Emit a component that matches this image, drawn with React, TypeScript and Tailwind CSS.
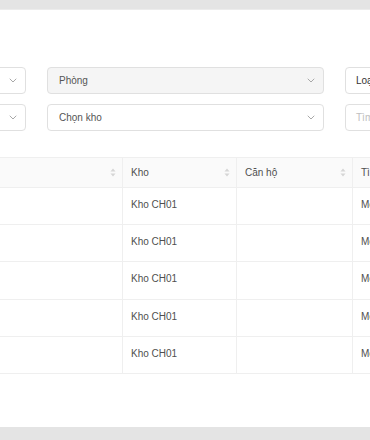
import React from "react";

const Chevron = () => (
  <svg width="8" height="5" viewBox="0 0 8 5" fill="none" className="shrink-0">
    <path d="M1 1l3 3 3-3" stroke="#a8a8a8" strokeWidth="1" strokeLinecap="round" strokeLinejoin="round" />
  </svg>
);

const Sorter = () => (
  <svg width="6" height="9" viewBox="0 0 6 9" className="shrink-0">
    <path d="M3 0.5L5.5 3.5H0.5Z" fill="#d6d6d6" />
    <path d="M3 8.5L0.5 5.5H5.5Z" fill="#d6d6d6" />
  </svg>
);

const rows = [0, 1, 2, 3, 4];

export default function App() {
  return (
    <div
      className="w-[370px] h-[440px] overflow-hidden bg-[#e4e4e4] flex flex-col"
      style={{ fontFamily: '"Liberation Sans", Arial, sans-serif' }}
    >
      <div className="h-[10px] shrink-0 bg-[#e4e4e4] border-b border-[#ececec]" />
      <div className="h-[417px] shrink-0 bg-white flex flex-col overflow-hidden">
        <div className="h-[57px] shrink-0" />
        {/* filters */}
        <div className="flex flex-col gap-[10px]">
          <div className="flex gap-[21px] -ml-[20px] h-[27px]">
            <div className="w-[46px] shrink-0 border border-[#e0e0e0] rounded-[4px] flex items-center justify-end pr-[8px]">
              <Chevron />
            </div>
            <div className="w-[277px] shrink-0 border border-[#e0e0e0] rounded-[4px] bg-[#f5f5f5] flex items-center justify-between pl-[11px] pr-[8px]">
              <span className="text-[10px] text-[#555]">Phòng</span>
              <Chevron />
            </div>
            <div className="w-[80px] shrink-0 border border-[#e0e0e0] rounded-[4px] flex items-center pl-[10px]">
              <span className="text-[10px] text-[#333]">Loại</span>
            </div>
          </div>
          <div className="flex gap-[21px] -ml-[20px] h-[27px]">
            <div className="w-[46px] shrink-0 border border-[#e0e0e0] rounded-[4px] flex items-center justify-end pr-[8px]">
              <Chevron />
            </div>
            <div className="w-[277px] shrink-0 border border-[#e0e0e0] rounded-[4px] bg-white flex items-center justify-between pl-[11px] pr-[8px]">
              <span className="text-[10px] text-[#555]">Chọn kho</span>
              <Chevron />
            </div>
            <div className="w-[80px] shrink-0 border border-[#e0e0e0] rounded-[4px] flex items-center pl-[10px]">
              <span className="text-[10px] text-[#c0c0c0]">Tìm kiếm</span>
            </div>
          </div>
        </div>
        <div className="h-[26px] shrink-0" />
        {/* table */}
        <div className="flex flex-col -ml-[40px] w-[500px] text-[10px] text-[#4f4f4f]">
          <div className="flex h-[31px] bg-[#fafafa] border-y border-[#efefef]">
            <div className="w-[163px] shrink-0 border-r border-[#efefef] flex items-center justify-end pr-[6px]">
              <Sorter />
            </div>
            <div className="w-[114px] shrink-0 border-r border-[#efefef] flex items-center justify-between pl-[8px] pr-[6px]">
              <span>Kho</span>
              <Sorter />
            </div>
            <div className="w-[116px] shrink-0 border-r border-[#efefef] flex items-center justify-between pl-[8px] pr-[6px]">
              <span>Căn hộ</span>
              <Sorter />
            </div>
            <div className="flex-1 flex items-center pl-[8px]">
              <span>Tình trạng</span>
            </div>
          </div>
          {rows.map((r) => (
            <div key={r} className="flex h-[37.2px] border-b border-[#efefef]">
              <div className="w-[163px] shrink-0 border-r border-[#efefef]" />
              <div className="w-[114px] shrink-0 border-r border-[#efefef] flex items-center pl-[8px] pb-[3px]">
                Kho CH01
              </div>
              <div className="w-[116px] shrink-0 border-r border-[#efefef]" />
              <div className="flex-1 flex items-center pl-[8px] pb-[3px]">Mới</div>
            </div>
          ))}
        </div>
      </div>
      <div className="flex-1 bg-[#e4e4e4]" />
    </div>
  );
}
